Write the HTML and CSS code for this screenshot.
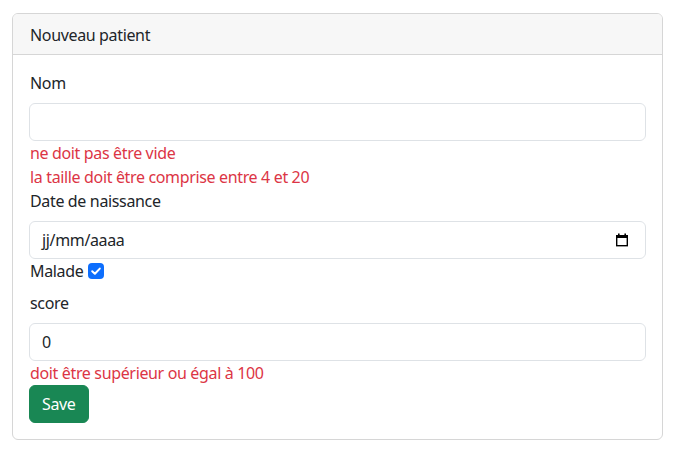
FILE: index.html
```html
<!DOCTYPE html>
<html lang="fr">
<head>
<meta charset="utf-8">
<title>Nouveau patient</title>
<link rel="stylesheet" href="styles.css">
</head>
<body>
<div class="container">
  <div class="card">
    <div class="card-header">Nouveau patient</div>
    <div class="card-body">
      <form class="form">
        <label class="form-label" for="nom">Nom</label>
        <input class="form-control" id="nom" type="text">
        <div class="error">ne doit pas être vide</div>
        <div class="error">la taille doit être comprise entre 4 et 20</div>
        <label class="form-label" for="date">Date de naissance</label>
        <div class="form-control date-control" id="date">
          <span class="date-text">jj/mm/aaaa</span>
          <svg class="cal-icon" width="14" height="14" viewBox="0 0 14 14" aria-hidden="true">
            <rect x="3" y="0.5" width="1.6" height="2.5" fill="#000"/>
            <rect x="9.4" y="0.5" width="1.6" height="2.5" fill="#000"/>
            <rect x="1" y="2" width="12" height="3" fill="#000"/>
            <rect x="1.7" y="2.7" width="10.6" height="10" fill="none" stroke="#000" stroke-width="1.4"/>
          </svg>
        </div>
        <label class="form-label check-label" for="malade">Malade
          <span class="checkbox" id="malade">
            <svg width="16" height="16" viewBox="0 0 16 16" aria-hidden="true"><path d="M4.2 8.2 L6.9 10.8 L11.8 5.6" fill="none" stroke="#fff" stroke-width="2" stroke-linecap="round" stroke-linejoin="round"/></svg>
          </span>
        </label>
        <label class="form-label" for="score">score</label>
        <input class="form-control" id="score" type="text" value="0">
        <div class="error">doit être supérieur ou égal à 100</div>
        <div><button class="btn-save" type="button">Save</button></div>
      </form>
    </div>
  </div>
</div>
</body>
</html>
```
FILE: styles.css
```css
* { box-sizing: border-box; }
html, body { margin: 0; padding: 0; background: #fff; }
body {
  font-family: "Noto Sans", "Segoe UI", "Liberation Sans", sans-serif;
  font-size: 16px;
  line-height: 24px;
  letter-spacing: -0.35px;
  color: #212529;
}
.container { padding: 13px 12px 0 12px; width: 675px; }
.card {
  border: 1px solid #d6d6d6;
  border-radius: 6px;
  overflow: hidden;
  width: 651px;
}
.card-header {
  background: #f7f7f7;
  border-bottom: 1px solid #d6d6d6;
  padding: 9px 17px 7px;
  line-height: 24px;
}
.card-body { padding: 16px; }
.form { display: flex; flex-direction: column; margin: 0; }
.form-label { display: block; margin-bottom: 8px; line-height: 24px; padding-left: 1px; }
.form-control {
  display: block;
  width: 100%;
  height: 38px;
  padding: 6px 12px;
  font: inherit;
  line-height: 24px;
  letter-spacing: -0.35px;
  color: #212529;
  background: #fff;
  border: 1px solid #dee2e6;
  border-radius: 6px;
  outline: none;
}
.date-control { display: flex; align-items: center; justify-content: space-between; padding-right: 16px; }
.cal-icon { display: block; }
.error { color: #dc3545; line-height: 24px; padding-left: 1px; }
.check-label { display: flex; align-items: center; gap: 5px; }
.checkbox {
  display: inline-block;
  width: 16px;
  height: 16px;
  border-radius: 4px;
  background: #0d6efd;
}
.checkbox svg { display: block; }
.btn-save {
  font: inherit;
  line-height: 24px;
  letter-spacing: -0.35px;
  color: #fff;
  background: #198754;
  border: 1px solid #198754;
  border-radius: 6px;
  padding: 6px 12px;
  cursor: pointer;
}
```
